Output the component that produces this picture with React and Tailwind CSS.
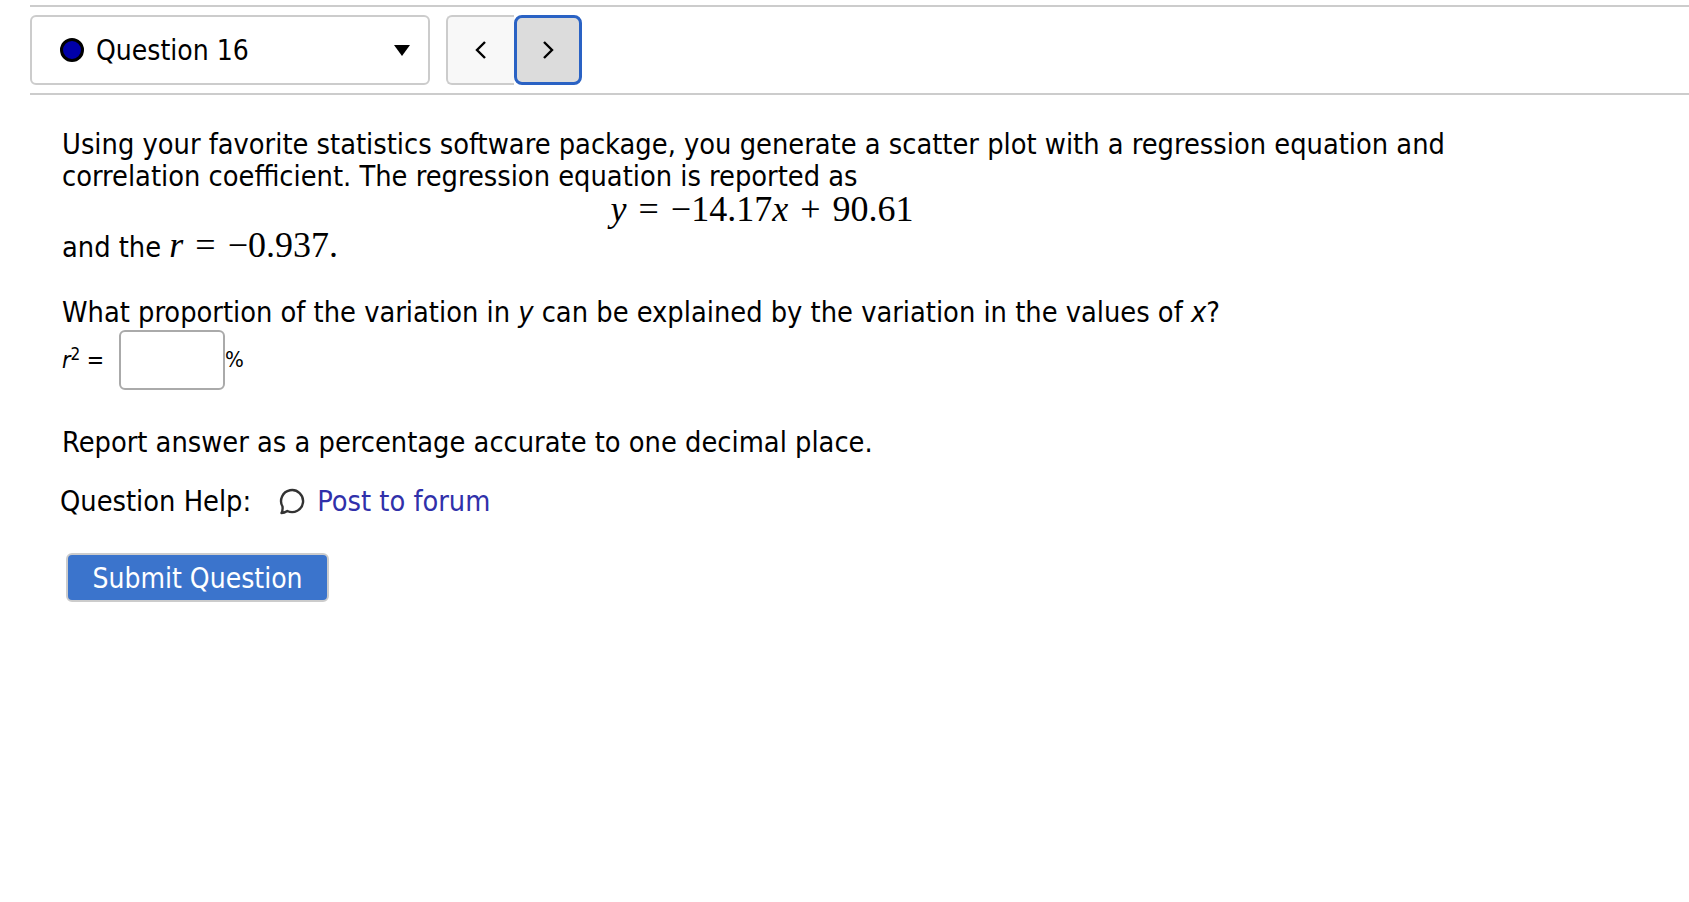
import React from "react";

const Math1 = ({ children, className = "" }) => (
  <span className={`font-['Liberation_Serif',serif] text-[36px] [word-spacing:3px] ${className}`}>{children}</span>
);

export default function App() {
  return (
    <div className="min-h-[902px] bg-white text-black font-['DejaVu_Sans_Condensed','DejaVu_Sans',sans-serif] [font-stretch:condensed] text-[28.7px] leading-[32px]">
      <div className="ml-[30px] pt-[5px]">
        <div className="border-t-2 border-[#cccccc] h-0" />
        <div className="flex items-center h-[69px] mt-[8px]">
          <div className="w-[400px] h-[70px] border-2 border-[#cccccc] rounded-[6px] flex items-center pl-[28px] pr-[18px]">
            <span className="w-[24px] h-[24px] rounded-full bg-[#0000aa] border-[3px] border-black shrink-0" />
            <span className="ml-[12px] flex-1 text-[28px] pt-[2px]">Question 16</span>
            <svg width="16" height="12" viewBox="0 0 16 12"><path d="M0 1h16L8 12z" fill="#000" /></svg>
          </div>
          <div className="ml-[16px] flex h-[70px]">
            <div className="w-[68px] border-2 border-r-0 border-[#cccccc] rounded-l-[6px] bg-[#f8f8f8] flex items-center justify-center">
              <svg width="14" height="20" viewBox="0 0 14 20" fill="none" stroke="#000" strokeWidth="2.4"><path d="M11 2 3 10l8 8" /></svg>
            </div>
            <div className="w-[68px] border-[3px] border-[#2a62c4] rounded-[8px] bg-[#dcdcdc] flex items-center justify-center">
              <svg width="14" height="20" viewBox="0 0 14 20" fill="none" stroke="#000" strokeWidth="2.4"><path d="m3 2 8 8-8 8" /></svg>
            </div>
          </div>
        </div>
        <div className="border-t-2 border-[#cccccc] h-0 mt-[9px]" />
      </div>

      <div className="ml-[62px] mt-[33px] w-[1500px]">
        <p>Using your favorite statistics software package, you generate a scatter plot with a regression equation and<br />correlation coefficient. The regression equation is reported as</p>
        <div className="text-center w-[1400px] leading-[33px] mt-[1px]">
          <Math1><i>y</i> = −14.17<i>x</i> + 90.61</Math1>
        </div>
        <p className="-mt-[2px] leading-[38px]">and the <Math1><i>r</i> = −0.937.</Math1></p>
        <p className="mt-[30px]">What proportion of the variation in <i>y</i> can be explained by the variation in the values of <i>x</i>?</p>
        <div className="flex items-center h-[60px] mt-[2px]">
          <span className="w-[57px] text-[23px]"><i>r</i><sup className="text-[17px]">2</sup> =</span>
          <span className="w-[106px] h-[60px] border-2 border-[#aaaaaa] rounded-[6px]" />
          <span className="text-[22px]">%</span>
        </div>
        <p className="mt-[36px]">Report answer as a percentage accurate to one decimal place.</p>
        <div className="-ml-[2px] mt-[27px] flex items-center">
          <span>Question Help:</span>
          <svg className="ml-[27px]" width="28" height="28" viewBox="0 0 28 28" fill="none" stroke="#333" strokeWidth="2.4"><path d="M3.500 26c1-2 1.300-4 1-6.500a11 11 0 1 1 4.800 4.500c-2 1.300-3.800 2-5.800 2z" strokeLinejoin="round" /></svg>
          <span className="ml-[11px] text-[#3030aa]">Post to forum</span>
        </div>
        <button className="block ml-[4px] mt-[36px] w-[263px] h-[49px] bg-[#3b74cc] border-2 border-[#cccccc] rounded-[6px] text-white text-[28px] leading-[47px]">Submit Question</button>
      </div>
    </div>
  );
}
